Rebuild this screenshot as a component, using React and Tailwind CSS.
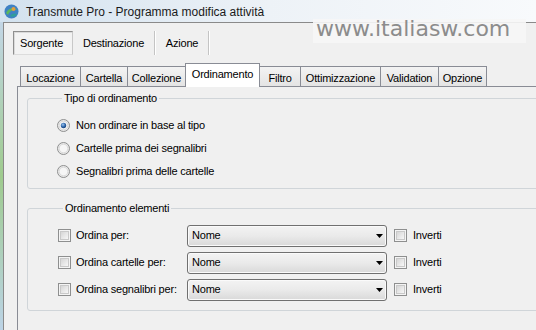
function AppIcon() {
    return (
        <svg width="15" height="15" viewBox="0 0 15 15" className="shrink-0">
            <circle cx="7.5" cy="7.5" r="7" fill="#3f82c4" />
            <path d="M2 9 C4 4, 10 3, 13 6 C10 5, 6 6, 4 11 Z" fill="#5cb85c" />
            <path d="M6 12 C8 9, 11 9, 13 10 C12 12, 9 14, 6 12 Z" fill="#2f9e9a" />
            <circle cx="9.5" cy="5" r="2" fill="#e0a040" />
        </svg>
    );
}

function Radio({ checked }) {
    return (
        <svg width="13" height="13" viewBox="0 0 13 13" className="shrink-0">
            <defs>
                <radialGradient id="rdot" cx="40%" cy="35%" r="70%">
                    <stop offset="0%" stopColor="#9cc4ee" />
                    <stop offset="60%" stopColor="#2d64a8" />
                    <stop offset="100%" stopColor="#173d70" />
                </radialGradient>
            </defs>
            <circle cx="6.5" cy="6.5" r="6" fill="#e9e9e9" stroke="#8e8f8f" />
            <circle cx="6.5" cy="6.5" r="4.3" fill="#f6f6f6" stroke="#d4d4d4" strokeWidth="0.8" />
            {checked && <circle cx="6.5" cy="6.5" r="2.7" fill="url(#rdot)" />}
        </svg>
    );
}

function Check() {
    return (
        <div className="w-[13px] h-[13px] shrink-0 border border-[#8e8f8f] bg-[#f4f4f4] p-[1px]">
            <div className="w-full h-full border border-[#c9c9c9] bg-linear-to-br from-[#d6d6d6] to-[#f7f7f7]" />
        </div>
    );
}

function Combo() {
    return (
        <div className="w-[200px] h-[22px] shrink-0 flex items-center pl-[4px] pr-[3px] rounded-[3px] border border-[#707070] bg-linear-to-b from-[#f3f3f3] via-[#eaeaea] to-[#d9d9d9] shadow-[inset_0_0_0_1px_#fafafa]">
            <span className="flex-1 leading-[13px]">Nome</span>
            <svg width="7" height="4" viewBox="0 0 7 4">
                <path d="M0 0H7L3.5 4Z" fill="#000" />
            </svg>
        </div>
    );
}

function Tab({ label, width, selected, noLeft, last }) {
    if (selected) {
        return (
            <div
                className="h-[24px] -mb-[1px] relative z-10 border-l border-t border-r border-[#898c95] bg-white flex justify-center pt-[4px] leading-[13px]"
                style={{ width }}
            >
                {label}
            </div>
        );
    }
    return (
        <div
            className={
                "h-[20px] border-t border-[#898c95] bg-linear-to-b from-[#f3f3f3] to-[#e4e4e4] flex justify-center pt-[5px] leading-[13px] " +
                (noLeft ? "" : "border-l ") +
                (last ? "border-r" : "")
            }
            style={{ width }}
        >
            {label}
        </div>
    );
}

const tabs = [
    { label: "Locazione", width: 60 },
    { label: "Cartella", width: 47 },
    { label: "Collezione", width: 58 },
    { label: "Ordinamento", width: 75, selected: true },
    { label: "Filtro", width: 40, noLeft: true },
    { label: "Ottimizzazione", width: 80 },
    { label: "Validation", width: 58 },
    { label: "Opzione", width: 49, last: true },
];

const sortRows = ["Ordina per:", "Ordina cartelle per:", "Ordina segnalibri per:"];

export default function App() {
    return (
        <div className="relative w-[536px] h-[330px] overflow-hidden bg-[#eef3f8] font-['Liberation_Sans',Arial,sans-serif] text-[11px] tracking-[-0.2px] text-black">
            {/* title bar */}
            <div className="h-[22px] flex items-center pl-[4px] gap-[7px] bg-linear-to-r from-[#d3e2ef] via-[#edf2f7] to-[#f8fafc]">
                <AppIcon />
                <span className="text-[12px] leading-[14px] tracking-normal text-[#1a1a1a] pt-[1px]">
                    Transmute Pro - Programma modifica attività
                </span>
            </div>

            <div className="flex h-[308px]">
                <div className="w-[3px] bg-linear-to-b from-[#c3d6e6] via-[#9fcb8e] to-[#bcd3e6]" />
                <div className="flex-1 min-w-0 flex flex-col border-l border-t border-[#8a8a8a] bg-[#f0f0f0]">
                    {/* tool strip */}
                    <div className="h-[40px] shrink-0 pt-[8px] pl-[9px] flex items-start">
                        <div className="w-[60px] h-[24px] flex items-center pl-[6px] leading-[13px] border border-t-[#8f8f8f] border-l-[#8f8f8f] border-r-[#c8c8c8] border-b-[#dcdcdc] bg-[#f3f3f3] shadow-[inset_1px_1px_0_#dadada]">
                            Sorgente
                        </div>
                        <div className="w-[81px] h-[24px] flex items-center justify-center leading-[13px]">
                            Destinazione
                        </div>
                        <div className="w-[2px] h-[24px] border-l border-[#c4c4c4] bg-white" />
                        <div className="w-[52px] h-[24px] flex items-center justify-center leading-[13px]">
                            Azione
                        </div>
                        <div className="w-[2px] h-[24px] border-l border-[#c4c4c4] bg-white" />
                    </div>

                    {/* tab control */}
                    <div className="ml-[13px] flex-1 flex flex-col">
                        <div className="h-[23px] shrink-0 pl-[3px] flex items-end">
                            {tabs.map((t) => (
                                <Tab key={t.label} {...t} />
                            ))}
                        </div>
                        <div className="flex-1 border-l border-t border-[#898c95] bg-[#f0f0f0] pl-[9px] pt-[5px] flex flex-col gap-[13px]">
                            <fieldset className="w-[600px] border border-[#d0d5d9] rounded-[3px] pl-[29px] pt-[9px] pb-[5px]">
                                <legend className="ml-[5px] px-[2px] leading-[13px]">Tipo di ordinamento</legend>
                                <div className="h-[23px] flex items-center gap-[6px]">
                                    <Radio checked />
                                    <span className="leading-[13px]">Non ordinare in base al tipo</span>
                                </div>
                                <div className="h-[23px] flex items-center gap-[6px]">
                                    <Radio />
                                    <span className="leading-[13px]">Cartelle prima dei segnalibri</span>
                                </div>
                                <div className="h-[23px] flex items-center gap-[6px]">
                                    <Radio />
                                    <span className="leading-[13px]">Segnalibri prima delle cartelle</span>
                                </div>
                            </fieldset>

                            <fieldset className="w-[600px] border border-[#d0d5d9] rounded-[3px] pl-[30px] pt-[7px] pb-[7px]">
                                <legend className="ml-[5px] px-[2px] leading-[13px]">Ordinamento elementi</legend>
                                {sortRows.map((label) => (
                                    <div key={label} className="h-[27px] flex items-center">
                                        <div className="w-[129px] flex items-center gap-[5px]">
                                            <Check />
                                            <span className="leading-[13px]">{label}</span>
                                        </div>
                                        <Combo />
                                        <div className="ml-[7px] flex items-center gap-[6px]">
                                            <Check />
                                            <span className="leading-[13px]">Inverti</span>
                                        </div>
                                    </div>
                                ))}
                            </fieldset>
                        </div>
                    </div>
                </div>
            </div>

            {/* watermark over the title bar */}
            <div className="absolute left-[313px] top-[19px] w-[213px] h-[24px] bg-[#f6f6f6]/90 pl-[3px] font-['DejaVu_Sans',sans-serif] text-[22px] leading-[19px] tracking-normal text-[#8c8c8c]">
                www.italiasw.com
            </div>
        </div>
    );
}
